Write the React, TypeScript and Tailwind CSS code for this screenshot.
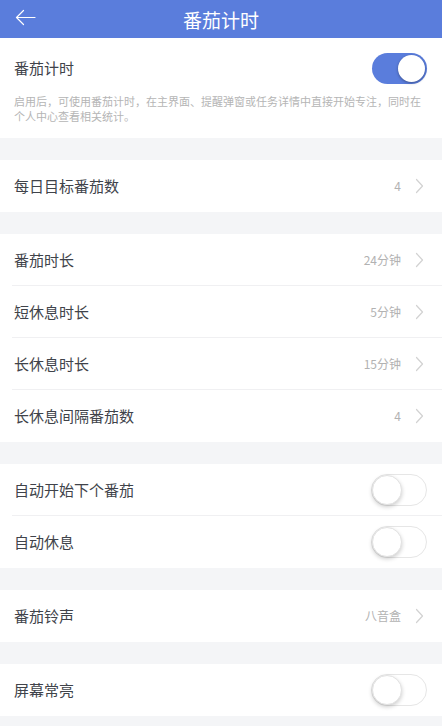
const font = { fontFamily: '"Noto Sans CJK SC", "Noto Sans", sans-serif' };

function Chevron() {
  return (
    <svg width="9" height="16" viewBox="0 0 9 16" fill="none" stroke="#d2d2d2" strokeWidth="1.2" strokeLinecap="round" strokeLinejoin="round">
      <path d="M1.5 1.5L7.5 8L1.5 14.5" />
    </svg>
  );
}

function Toggle({ on }: { on?: boolean }) {
  if (on) {
    return (
      <div className="w-[55px] h-[31px] rounded-full bg-[#5a7ddc] relative shrink-0">
        <div className="absolute right-[2px] top-[2px] w-[27px] h-[27px] rounded-full bg-white shadow-[0_1px_3px_rgba(0,0,0,0.35)]" />
      </div>
    );
  }
  return (
    <div className="w-[56px] h-[32px] rounded-full bg-white border border-[#e6e6e6] relative shrink-0">
      <div className="absolute left-0 top-0 w-[30px] h-[30px] rounded-full bg-white border border-[#e2e2e2] shadow-[0_2px_4px_rgba(0,0,0,0.2)]" />
    </div>
  );
}

function Row({ label, value, toggle, divider }: { label: string; value?: string; toggle?: boolean; divider?: boolean }) {
  return (
    <div className="relative h-[52px] flex items-center pl-[14px] pr-[15px]">
      <span className="flex-1 text-[15px] text-[#40434a]">{label}</span>
      {toggle ? (
        <Toggle />
      ) : (
        <div className="flex items-center gap-[14px] pr-[3px]">
          <span className="text-[12px] text-[#b2b2b2]">{value}</span>
          <Chevron />
        </div>
      )}
      {divider && <div className="absolute left-[12px] right-0 bottom-0 h-px bg-[#f0f0f2]" />}
    </div>
  );
}

function Gap() {
  return <div className="h-[22px] bg-[#f4f5f7]" />;
}

export default function App() {
  return (
    <div className="w-[442px] h-[726px] bg-[#f4f5f7] overflow-hidden" style={font}>
      <div className="h-[38px] bg-[#5a7ddc] flex items-center relative">
        <svg className="absolute left-[15px] top-[9px]" width="21" height="17" viewBox="0 0 21 17" fill="none" stroke="white" strokeWidth="1.2" strokeLinecap="round" strokeLinejoin="round">
          <path d="M20 8.5H1.5" />
          <path d="M8.5 1.5L1.5 8.5L8.5 15.5" />
        </svg>
        <span className="flex-1 text-center text-[19px] text-white leading-none">番茄计时</span>
      </div>

      <div className="bg-white h-[100px] px-[14px]">
        <div className="h-[56px] flex items-center justify-between pt-[4px]">
          <span className="text-[15px] text-[#40434a]">番茄计时</span>
          <div className="mr-[1px]"><Toggle on /></div>
        </div>
        <p className="text-[11px] leading-[15px] text-[#b5b5b5]">
          启用后，可使用番茄计时，在主界面、提醒弹窗或任务详情中直接开始专注，同时在个人中心查看相关统计。
        </p>
      </div>

      <Gap />
      <div className="bg-white">
        <Row label="每日目标番茄数" value="4" />
      </div>

      <Gap />
      <div className="bg-white">
        <Row label="番茄时长" value="24分钟" divider />
        <Row label="短休息时长" value="5分钟" divider />
        <Row label="长休息时长" value="15分钟" divider />
        <Row label="长休息间隔番茄数" value="4" />
      </div>

      <Gap />
      <div className="bg-white">
        <Row label="自动开始下个番茄" toggle divider />
        <Row label="自动休息" toggle />
      </div>

      <Gap />
      <div className="bg-white">
        <Row label="番茄铃声" value="八音盒" />
      </div>

      <Gap />
      <div className="bg-white">
        <Row label="屏幕常亮" toggle />
      </div>
    </div>
  );
}
